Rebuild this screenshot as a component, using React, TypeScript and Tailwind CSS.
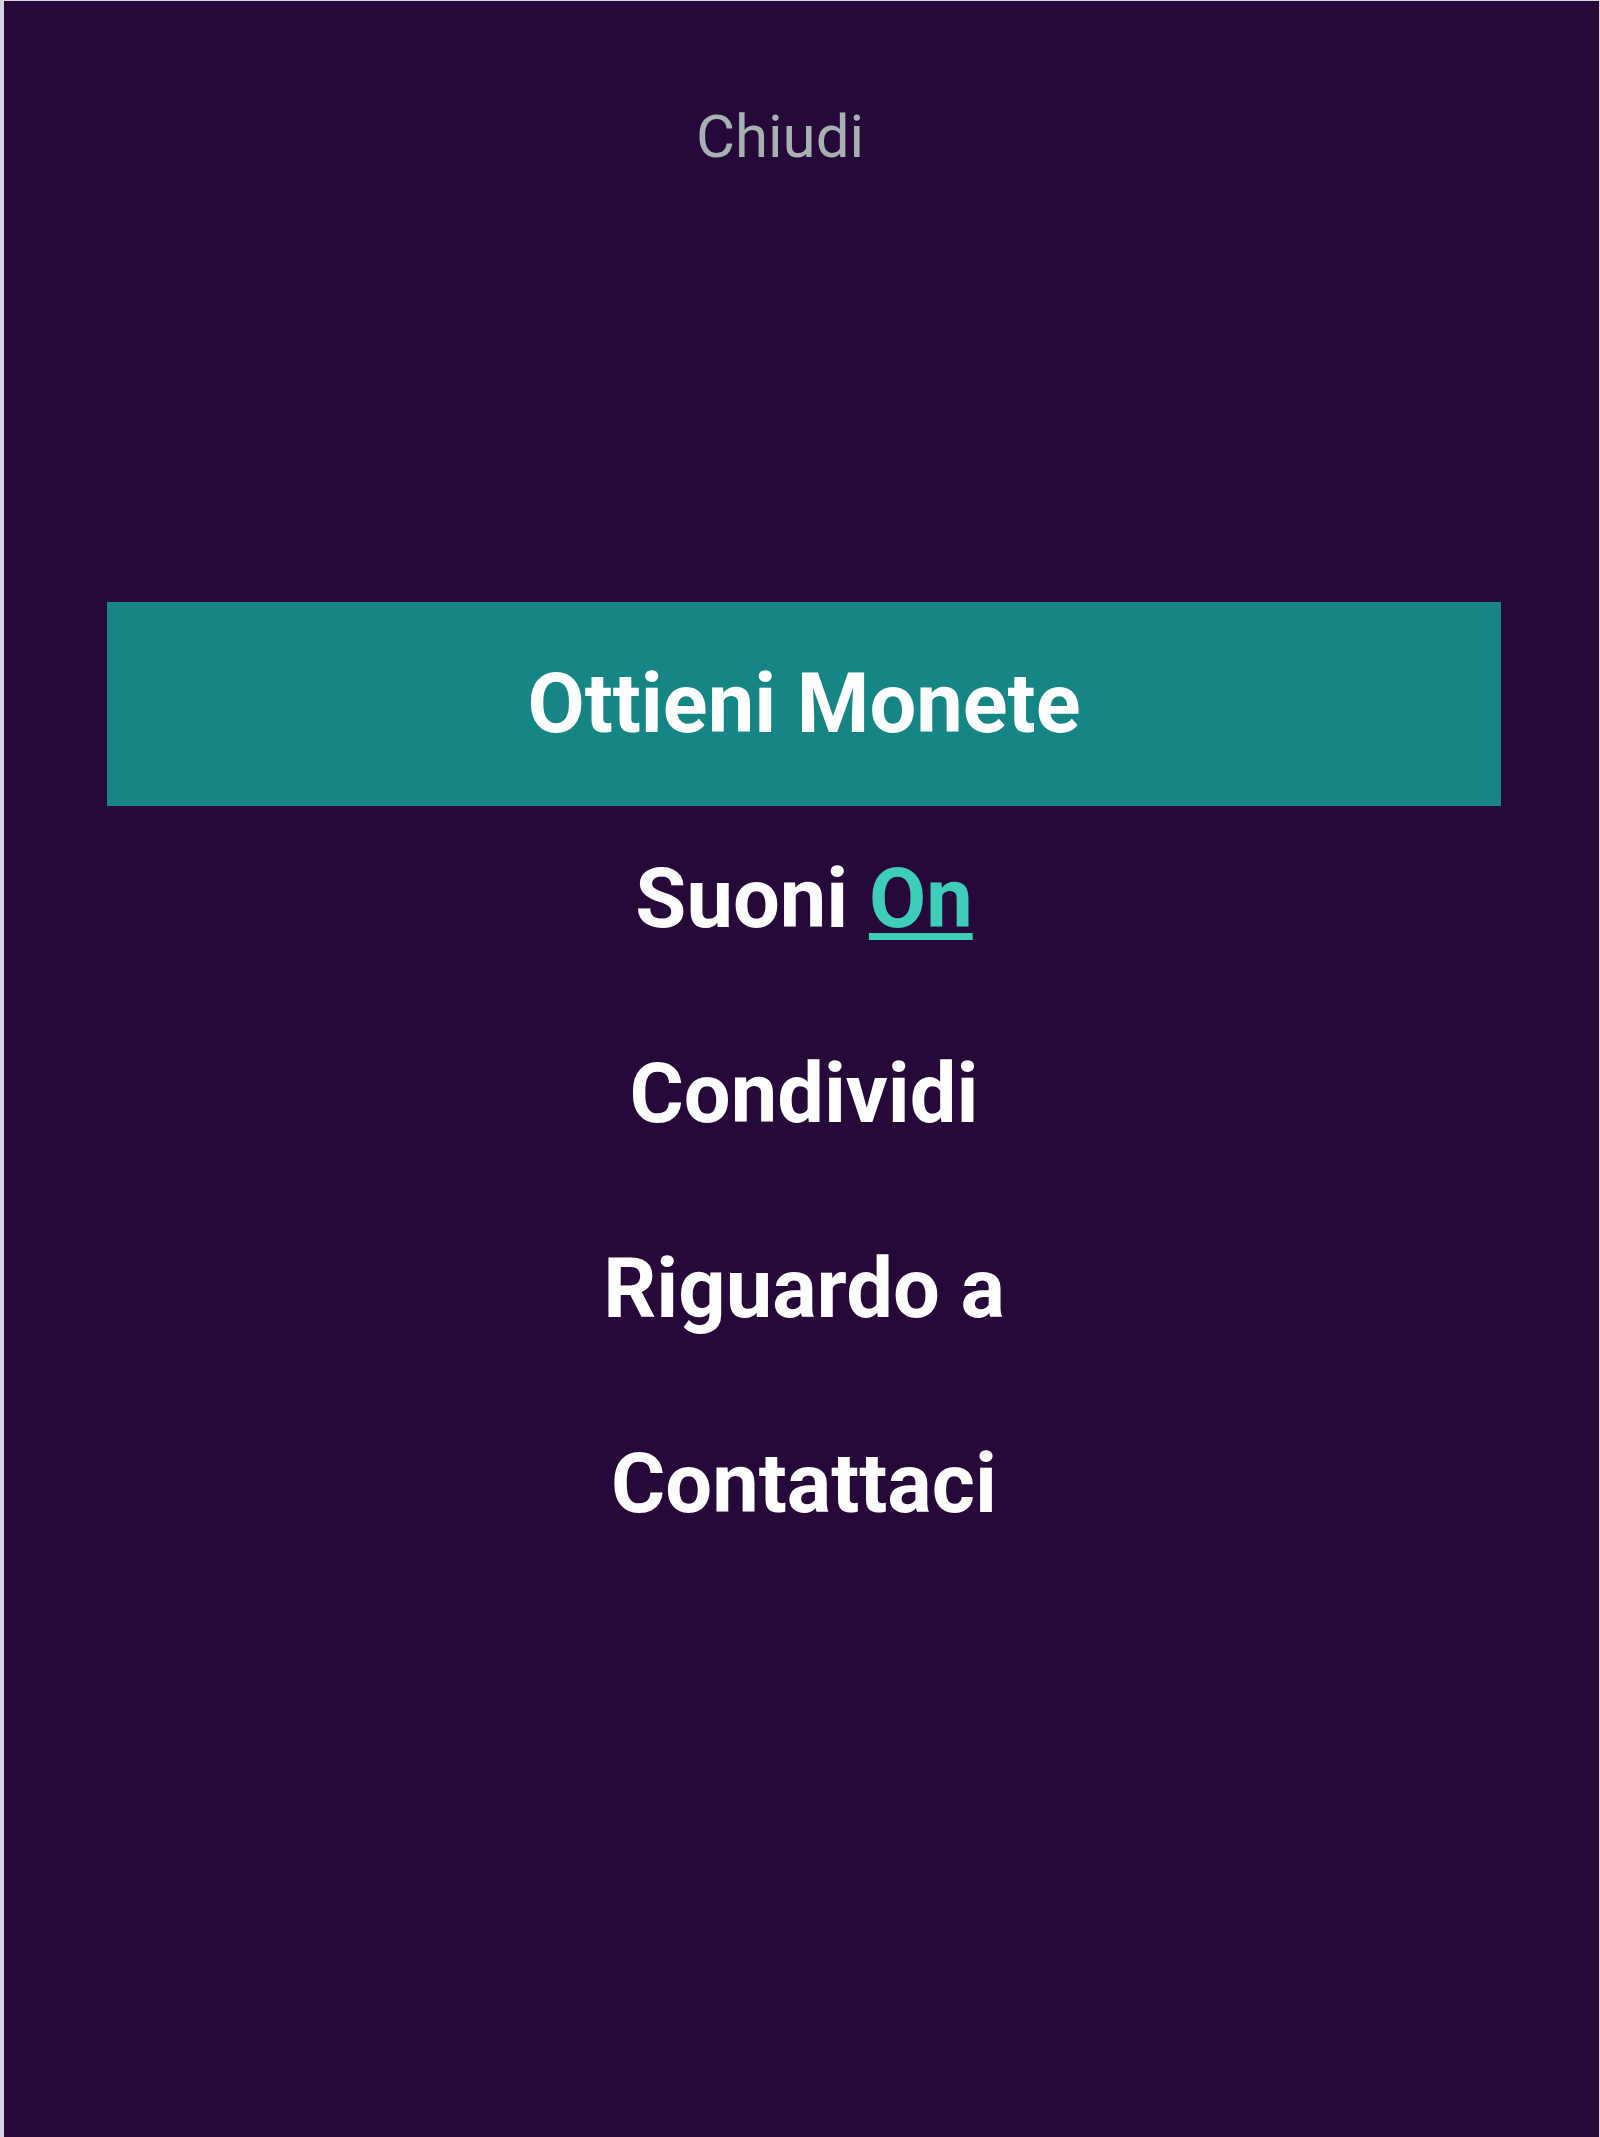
const items = ['Condividi', 'Riguardo a', 'Contattaci'];

export default function App() {
  return (
    <div
      className="min-h-[2137px] w-[1600px] bg-[#26093a] border-l-4 border-t border-r border-[#d9d4dc]"
      style={{ fontFamily: 'Roboto, "Open Sans", sans-serif' }}
    >
      {/* Close link */}
      <div className="pt-[101px] w-[1552px] text-center">
        <span className="text-[60px] leading-[70px] text-[#a8b0b4]">Chiudi</span>
      </div>

      {/* Menu */}
      <nav className="mt-[430px] ml-[103px] w-[1394px] flex flex-col text-white font-bold text-[83px] text-center">
        <div className="h-[204px] leading-[204px] bg-[#158585]">Ottieni Monete</div>
        <div className="h-[195px] leading-[195px] -mt-[5px]">
          Suoni{' '}
          <span className="text-[#3ecdbb] underline decoration-[7px] underline-offset-[6px]">On</span>
        </div>
        {items.map((label) => (
          <div key={label} className="h-[195px] leading-[195px]">
            {label}
          </div>
        ))}
      </nav>
    </div>
  );
}
